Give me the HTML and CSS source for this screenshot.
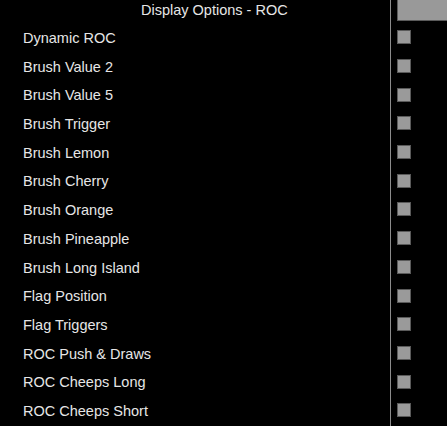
FILE: index.html
```html
<!DOCTYPE html>
<html>
<head>
<meta charset="utf-8">
<link rel="stylesheet" href="styles.css">
</head>
<body>
<div class="panel">
  <div class="main">
    <div class="title">Display Options - ROC</div>
    <div class="row">Dynamic ROC</div>
    <div class="row">Brush Value 2</div>
    <div class="row">Brush Value 5</div>
    <div class="row">Brush Trigger</div>
    <div class="row">Brush Lemon</div>
    <div class="row">Brush Cherry</div>
    <div class="row">Brush Orange</div>
    <div class="row">Brush Pineapple</div>
    <div class="row">Brush Long Island</div>
    <div class="row">Flag Position</div>
    <div class="row">Flag Triggers</div>
    <div class="row">ROC Push &amp; Draws</div>
    <div class="row">ROC Cheeps Long</div>
    <div class="row">ROC Cheeps Short</div>
  </div>
  <div class="divider"></div>
  <div class="side">
    <div class="topbox"></div>
    <div class="cell"><span class="check"></span></div>
    <div class="cell"><span class="check"></span></div>
    <div class="cell"><span class="check"></span></div>
    <div class="cell"><span class="check"></span></div>
    <div class="cell"><span class="check"></span></div>
    <div class="cell"><span class="check"></span></div>
    <div class="cell"><span class="check"></span></div>
    <div class="cell"><span class="check"></span></div>
    <div class="cell"><span class="check"></span></div>
    <div class="cell"><span class="check"></span></div>
    <div class="cell"><span class="check"></span></div>
    <div class="cell"><span class="check"></span></div>
    <div class="cell"><span class="check"></span></div>
    <div class="cell"><span class="check"></span></div>
  </div>
</div>
</body>
</html>
```
FILE: styles.css
```css
html, body {
  margin: 0;
  padding: 0;
  background: #000;
  width: 447px;
  height: 426px;
  overflow: hidden;
}
.panel {
  display: flex;
  height: 426px;
  font-family: "Liberation Sans", Arial, sans-serif;
  font-size: 14.5px;
  color: #e6e6e6;
}
.main {
  width: 390px;
  display: flex;
  flex-direction: column;
}
.title {
  height: 24px;
  line-height: 21px;
  padding-left: 141px;
  white-space: nowrap;
}
.row {
  height: 28.7px;
  line-height: 28.7px;
  padding-left: 23px;
  white-space: nowrap;
}
.divider {
  width: 1px;
  background: #8c8c8c;
  height: 426px;
}
.side {
  flex: 1;
  padding-left: 6px;
  display: flex;
  flex-direction: column;
}
.topbox {
  height: 21px;
  margin-bottom: 2px;
  background: #999;
  border: 1px solid #5a5a5a;
  border-top: 0;
  border-right: 0;
  box-sizing: border-box;
}
.cell {
  height: 28.7px;
  display: flex;
  align-items: center;
}
.check {
  width: 14px;
  height: 14px;
  box-sizing: border-box;
  background: #9a9a9a;
  border: 1px solid #5a5a5a;
}
```
